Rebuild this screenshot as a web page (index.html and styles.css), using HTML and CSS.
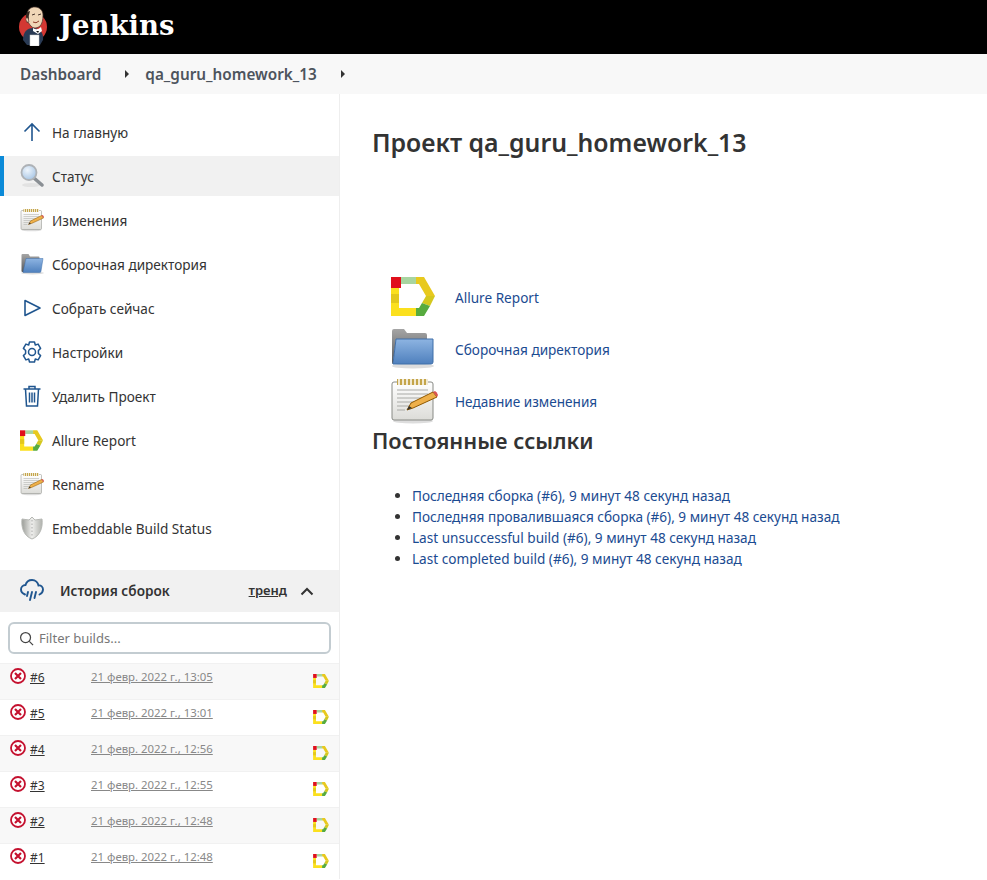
FILE: index.html
```html
<!DOCTYPE html>
<html lang="ru">
<head>
    <meta charset="UTF-8">
    <title>qa_guru_homework_13 - Jenkins</title>
    <link rel="stylesheet" href="styles.css">
</head>
<body>
    <svg class="sprites" aria-hidden="true">
        <defs>
            <linearGradient id="folderBack" x1="0" y1="0" x2="0" y2="1"><stop offset="0" stop-color="#a5a5a5"/><stop offset="1" stop-color="#55575a"/></linearGradient>
            <linearGradient id="folderFront" x1="0" y1="0" x2="0" y2="1"><stop offset="0" stop-color="#8db4e2"/><stop offset="1" stop-color="#4f80bd"/></linearGradient>
            <linearGradient id="paper" x1="0" y1="0" x2="0" y2="1"><stop offset="0" stop-color="#ffffff"/><stop offset="1" stop-color="#dcdcd8"/></linearGradient>
            <linearGradient id="shield" x1="0" y1="0" x2="1" y2="0"><stop offset="0" stop-color="#9a9c97"/><stop offset=".5" stop-color="#efefed"/><stop offset="1" stop-color="#b0b2ad"/></linearGradient>
            <radialGradient id="lens" cx=".4" cy=".35" r=".7"><stop offset="0" stop-color="#eef5fc"/><stop offset="1" stop-color="#a5c4e4"/></radialGradient>
        </defs>
        <symbol id="i-allure" viewBox="0 0 44 39">
            <path d="M0 11h8v20h17v8H0z" fill="#fbe01e"/>
            <path d="M0 17h8v9H0z" fill="#e3c81d"/>
            <path d="M25 0h8l11 19h-9L28 7h-3z" fill="#e8c91e"/>
            <path d="M35 19h9l-5 10-8-3z" fill="#d4c81f"/>
            <path d="M25 31h3l3-5 8 3-6 10h-8z" fill="#57ab3f"/>
            <path d="M10 0h15v7H10z" fill="#a8d5a0"/>
            <path d="M0 0h10v11H0z" fill="#e0101c"/>
        </symbol>
        <symbol id="i-folder" viewBox="0 0 48 48">
            <ellipse cx="23" cy="41" rx="21" ry="2.500" fill="#ddd"/>
            <path d="M2 6q0-2 2-2h10l3 4h18q2 0 2 2v4H6L3 39q-1 0-1-2z" fill="url(#folderBack)"/>
            <path d="M6 14h37v23q0 2-2 2H3z" fill="url(#folderFront)" stroke="#3f6ea8"/>
        </symbol>
        <symbol id="i-folder-open" viewBox="0 0 48 48">
            <ellipse cx="25" cy="42" rx="23" ry="3" fill="#ddd"/>
            <path d="M3 6q0-2 2-2h12l3 5h17q2 0 2 2v4H12L9 40H5q-2 0-2-2z" fill="url(#folderBack)"/>
            <path d="M12 13h34l-4 25q0 3-3 3H6z" fill="url(#folderFront)" stroke="#3f6ea8"/>
        </symbol>
        <symbol id="i-notepad" viewBox="0 0 48 48">
            <ellipse cx="23" cy="44" rx="20" ry="2.500" fill="#ddd"/>
            <rect x="2" y="5" width="41" height="38" rx="2" fill="url(#paper)" stroke="#888a85"/>
            <rect x="7" y="2" width="31" height="6" fill="#c4a54a"/>
            <path d="M9 2v6m4-6v6m4-6v6m4-6v6m4-6v6m4-6v6m4-6v6m4-6v6" stroke="#fff" stroke-width="1.500"/>
            <path d="M7 13h31M7 17h31M7 21h31M7 25h24M7 29h12M7 33h8" stroke="#a9aaa6"/>
            <path d="M17 33l4-7 22-11 4 5-24 11z" fill="#eeb04a" stroke="#8f5902"/>
            <path d="M43 15l2-1q2 1 3 4l-1 2z" fill="#d9534f"/>
            <path d="M17 33l2-4 3 2z" fill="#333"/>
        </symbol>
        <symbol id="i-search" viewBox="0 0 24 24">
            <ellipse cx="11" cy="21" rx="9" ry="2" fill="#e2e2e2"/>
            <path d="M14.500 14.500l7.500 6.500" stroke="#8a8f94" stroke-width="3.500" stroke-linecap="round"/>
            <circle cx="9" cy="8.500" r="7.500" fill="url(#lens)" stroke="#aeb2b6" stroke-width="1.800"/>
        </symbol>
        <symbol id="i-shield" viewBox="0 0 24 24">
            <path d="M12 1l3 3 7-1c1 9-2 17-10 20C4 20 1 12 2 3l7 1z" fill="url(#shield)" stroke="#b6b8b4"/>
            <path d="M12 4v17" stroke="#aaa" stroke-dasharray="1.500 2"/>
        </symbol>
        <symbol id="i-fail" viewBox="0 0 16 16">
            <circle cx="8" cy="8" r="7" fill="#fff" stroke="#c4112f" stroke-width="1.800"/>
            <path d="M5 5l6 6m0-6l-6 6" stroke="#c4112f" stroke-width="2.200"/>
        </symbol>
    </svg>

    <header class="top-bar">
        <svg class="butler" viewBox="0 0 30 40">
            <circle cx="14" cy="21" r="14" fill="#d33833"/>
            <path d="M4 34c0-8 4-12 10-12s11 4 10 12l-3 5H8z" fill="#2a3b55"/>
            <path d="M8 10C8 3 12 1 16 1s8 3 8 8c0 5-1 9-3 11-2 2-7 3-9 0-2-2-4-5-4-10z" fill="#f0d6b7" stroke="#49352c" stroke-width=".7"/>
            <path d="M8 6q-2 5 0 11l2-2q-1-5 1-10z" fill="#33261f"/>
            <path d="M9 12q-3-1-2 2t3 2z" fill="#f0d6b7" stroke="#49352c" stroke-width=".5"/>
            <path d="M14 22q4 3 8-1l1 4-4 3-5-3z" fill="#fff"/>
            <path d="M17 25l3 0-1 2z" fill="#111"/>
            <path d="M13 9l3-1m3 1l3-1" stroke="#49352c"/>
            <path d="M14 16q3 2 6-1" stroke="#8f3b2a" fill="none"/>
            <rect x="11" y="29" width="9" height="11" fill="#fff" stroke="#ccc" stroke-width=".5"/>
        </svg>
        <span class="brand">Jenkins</span>
    </header>

    <nav class="breadcrumbs">
        <a class="crumb" href="#">Dashboard</a>
        <span class="crumb-arrow"></span>
        <a class="crumb" href="#">qa_guru_homework_13</a>
        <span class="crumb-arrow"></span>
    </nav>

    <div class="layout">
        <aside class="side-panel">
            <ul class="tasks">
                <li class="task">
                    <svg class="task-icon" viewBox="0 0 24 24" fill="none" stroke="#20568f" stroke-width="1.600"><path d="M12 21V4M4.500 11.500L12 4l7.500 7.500"/></svg>
                    <a href="#">На главную</a>
                </li>
                <li class="task active">
                    <svg class="task-icon"><use href="#i-search"/></svg>
                    <a href="#">Статус</a>
                </li>
                <li class="task">
                    <svg class="task-icon"><use href="#i-notepad"/></svg>
                    <a href="#">Изменения</a>
                </li>
                <li class="task">
                    <svg class="task-icon"><use href="#i-folder-open"/></svg>
                    <a href="#">Сборочная директория</a>
                </li>
                <li class="task">
                    <svg class="task-icon" viewBox="0 0 24 24" fill="none" stroke="#20568f" stroke-width="1.600" stroke-linejoin="round"><path d="M5 4.500v15l15-7.500z"/></svg>
                    <a href="#">Собрать сейчас</a>
                </li>
                <li class="task">
                    <svg class="task-icon" viewBox="0 0 24 24" fill="none" stroke="#20568f" stroke-width="1.500" stroke-linejoin="round"><circle cx="12" cy="12" r="3.500"/><path d="M9.500 2h5l.8 3 2.800-.9 2.500 4.300-2.200 2.100v3l2.200 2.100-2.500 4.300-2.800-.9-.8 3h-5l-.8-3-2.800.9-2.500-4.300 2.200-2.100v-3L3.400 8.400l2.500-4.300 2.800.9z"/></svg>
                    <a href="#">Настройки</a>
                </li>
                <li class="task">
                    <svg class="task-icon" viewBox="0 0 24 24" fill="none" stroke="#20568f" stroke-width="1.500"><path d="M3.500 5h17M9 5V2.500h6V5M5.500 5l1 17h11l1-17M9.500 8.500v10M12 8.500v10M14.500 8.500v10"/></svg>
                    <a href="#">Удалить Проект</a>
                </li>
                <li class="task">
                    <svg class="task-icon allure"><use href="#i-allure"/></svg>
                    <a href="#">Allure Report</a>
                </li>
                <li class="task">
                    <svg class="task-icon"><use href="#i-notepad"/></svg>
                    <a href="#">Rename</a>
                </li>
                <li class="task">
                    <svg class="task-icon"><use href="#i-shield"/></svg>
                    <a href="#">Embeddable Build Status</a>
                </li>
            </ul>

            <section class="history">
                <div class="history-head">
                    <svg class="history-icon" viewBox="0 0 24 24" fill="none" stroke="#20568f" stroke-width="1.900" stroke-linecap="round"><path d="M5 16.500C2.500 15.500 1 14 1 11.500 1 9 3 7 5.500 7 6.500 3.500 9 2 12 2c3.500 0 6 2.500 6.500 5.500 2.500-.5 4.500 1.500 4.500 4 0 2.500-1.500 4-3.500 5M8 14l-1 4M12 14l-2 8M16 14l-1.500 6"/></svg>
                    <span class="history-title">История сборок</span>
                    <a class="trend" href="#">тренд</a>
                    <svg class="chevron" viewBox="0 0 14 9" fill="none" stroke="#333" stroke-width="2"><path d="M1.500 7.500L7 2l5.500 5.500"/></svg>
                </div>
                <div class="filter-wrap">
                    <label class="filter">
                        <svg class="filter-icon" viewBox="0 0 16 16" fill="none" stroke="#444" stroke-width="1.300"><circle cx="7" cy="7" r="5.300"/><path d="M11 11l4 4"/></svg>
                        <input type="text" placeholder="Filter builds...">
                    </label>
                </div>
                <div class="build">
                    <svg class="build-status"><use href="#i-fail"/></svg>
                    <a class="build-num" href="#">#6</a>
                    <a class="build-date" href="#">21 февр. 2022 г., 13:05</a>
                    <svg class="build-allure"><use href="#i-allure"/></svg>
                </div>
                <div class="build">
                    <svg class="build-status"><use href="#i-fail"/></svg>
                    <a class="build-num" href="#">#5</a>
                    <a class="build-date" href="#">21 февр. 2022 г., 13:01</a>
                    <svg class="build-allure"><use href="#i-allure"/></svg>
                </div>
                <div class="build">
                    <svg class="build-status"><use href="#i-fail"/></svg>
                    <a class="build-num" href="#">#4</a>
                    <a class="build-date" href="#">21 февр. 2022 г., 12:56</a>
                    <svg class="build-allure"><use href="#i-allure"/></svg>
                </div>
                <div class="build">
                    <svg class="build-status"><use href="#i-fail"/></svg>
                    <a class="build-num" href="#">#3</a>
                    <a class="build-date" href="#">21 февр. 2022 г., 12:55</a>
                    <svg class="build-allure"><use href="#i-allure"/></svg>
                </div>
                <div class="build">
                    <svg class="build-status"><use href="#i-fail"/></svg>
                    <a class="build-num" href="#">#2</a>
                    <a class="build-date" href="#">21 февр. 2022 г., 12:48</a>
                    <svg class="build-allure"><use href="#i-allure"/></svg>
                </div>
                <div class="build">
                    <svg class="build-status"><use href="#i-fail"/></svg>
                    <a class="build-num" href="#">#1</a>
                    <a class="build-date" href="#">21 февр. 2022 г., 12:48</a>
                    <svg class="build-allure"><use href="#i-allure"/></svg>
                </div>
            </section>
        </aside>

        <main class="content">
            <h1>Проект qa_guru_homework_13</h1>
            <div class="actions">
                <div class="action">
                    <svg class="action-icon allure"><use href="#i-allure"/></svg>
                    <a href="#">Allure Report</a>
                </div>
                <div class="action">
                    <svg class="action-icon"><use href="#i-folder"/></svg>
                    <a href="#">Сборочная директория</a>
                </div>
                <div class="action">
                    <svg class="action-icon"><use href="#i-notepad"/></svg>
                    <a href="#">Недавние изменения</a>
                </div>
            </div>
            <h2>Постоянные ссылки</h2>
            <ul class="permalinks">
                <li><a href="#">Последняя сборка (#6), 9 минут 48 секунд назад</a></li>
                <li><a href="#">Последняя провалившаяся сборка (#6), 9 минут 48 секунд назад</a></li>
                <li><a href="#">Last unsuccessful build (#6), 9 минут 48 секунд назад</a></li>
                <li><a href="#">Last completed build (#6), 9 минут 48 секунд назад</a></li>
            </ul>
        </main>
    </div>
</body>
</html>
```

FILE: styles.css
```css
body {
    margin: 0;
    font-family: "Noto Sans", sans-serif;
    font-size: 13.6px;
    color: #333;
    background: #fff;
}

a {
    color: inherit;
    text-decoration: none;
}

ul {
    margin: 0;
    padding: 0;
    list-style: none;
}

.sprites {
    display: block;
    width: 0;
    height: 0;
}

.top-bar {
    height: 54px;
    background: #000;
    display: flex;
    align-items: center;
    padding-left: 19px;
    box-sizing: border-box;
}

.butler {
    width: 30px;
    height: 40px;
    margin-right: 10px;
    margin-bottom: 3px;
}

.brand {
    font-family: "DejaVu Serif", serif;
    font-weight: bold;
    font-size: 27.5px;
    color: #fff;
    margin-bottom: 5px;
}

.breadcrumbs {
    height: 40px;
    background: #f8f8f8;
    display: flex;
    align-items: center;
    padding-left: 20px;
    font-size: 15.3px;
    font-weight: 600;
    color: #4d545d;
}

.crumb-arrow {
    width: 0;
    height: 0;
    margin: 0 16px 0 24px;
    border-left: 4px solid #333;
    border-top: 4px solid transparent;
    border-bottom: 4px solid transparent;
}

.layout {
    display: flex;
}

.side-panel {
    width: 339px;
    flex-shrink: 0;
    border-right: 1px solid #eee;
}

.tasks {
    padding-top: 16px;
    padding-bottom: 20px;
}

.task {
    height: 44px;
    display: flex;
    align-items: center;
    padding-left: 20px;
    box-sizing: border-box;
}

.task.active {
    height: 40px;
    margin: 2px 0;
    background: #f1f1f1;
    box-shadow: inset 4px 0 0 #0b8ad8;
}

.task-icon {
    width: 24px;
    height: 24px;
    margin-right: 8px;
}

.task-icon.allure {
    width: 23px;
    height: 21px;
    margin-right: 9px;
}

.history-head {
    height: 42px;
    background: #f1f1f1;
    display: flex;
    align-items: center;
    padding: 0 25px 2px 20px;
    box-sizing: border-box;
}

.history-icon {
    width: 24px;
    height: 24px;
    margin-right: 16px;
}

.history-title {
    flex: 1;
    font-weight: 600;
}

.trend {
    font-size: 13px;
    font-weight: 600;
    text-decoration: underline;
    margin-right: 13px;
}

.chevron {
    width: 14px;
    height: 9px;
    margin-top: 2px;
}

.filter-wrap {
    padding: 10px 8px 9px;
}

.filter {
    height: 32px;
    border: 2px solid #c3ccd1;
    border-radius: 6px;
    display: flex;
    align-items: center;
    padding-left: 9px;
    box-sizing: border-box;
}

.filter-icon {
    width: 15px;
    height: 15px;
    margin-right: 5px;
}

.filter input {
    flex: 1;
    min-width: 0;
    border: 0;
    outline: 0;
    padding: 0;
    background: transparent;
    font: 13px "Noto Sans", sans-serif;
}

.filter input::placeholder {
    color: #777;
}

.build {
    height: 36px;
    display: flex;
    align-items: flex-start;
    padding-left: 10px;
    box-sizing: border-box;
    border-top: 1px solid #f1f1f1;
    font-size: 12px;
}

.build:nth-of-type(odd) {
    background: #f8f8f8;
}

.build-status {
    width: 16px;
    height: 16px;
    margin-top: 4px;
    margin-right: 4px;
}

.build-num {
    width: 61px;
    margin-top: 5px;
    text-decoration: underline;
}

.build-date {
    flex: 1;
    margin-top: 5px;
    font-size: 11.4px;
    color: #888;
    text-decoration: underline;
}

.build-allure {
    width: 16px;
    height: 14px;
    margin-top: 10px;
    margin-right: 10px;
}

.content {
    flex: 1;
    padding: 31px 32px 0;
}

h1 {
    margin: 0;
    font-size: 24.8px;
    line-height: 34px;
    font-weight: 600;
}

.actions {
    margin-top: 112px;
}

.action {
    height: 52px;
    display: flex;
    align-items: center;
    padding-left: 18px;
}

.action a,
.permalinks a {
    color: #1b4b91;
}

.action-icon {
    width: 48px;
    height: 48px;
    margin-right: 17px;
}

.action-icon.allure {
    width: 44px;
    height: 39px;
    margin: 0 20px 2px 1px;
}

h2 {
    margin: 0;
    font-size: 21.8px;
    line-height: 28px;
    font-weight: 600;
}

.permalinks {
    margin-top: 30px;
    padding-left: 40px;
    list-style: disc;
}

.permalinks li {
    line-height: 21px;
}
```
